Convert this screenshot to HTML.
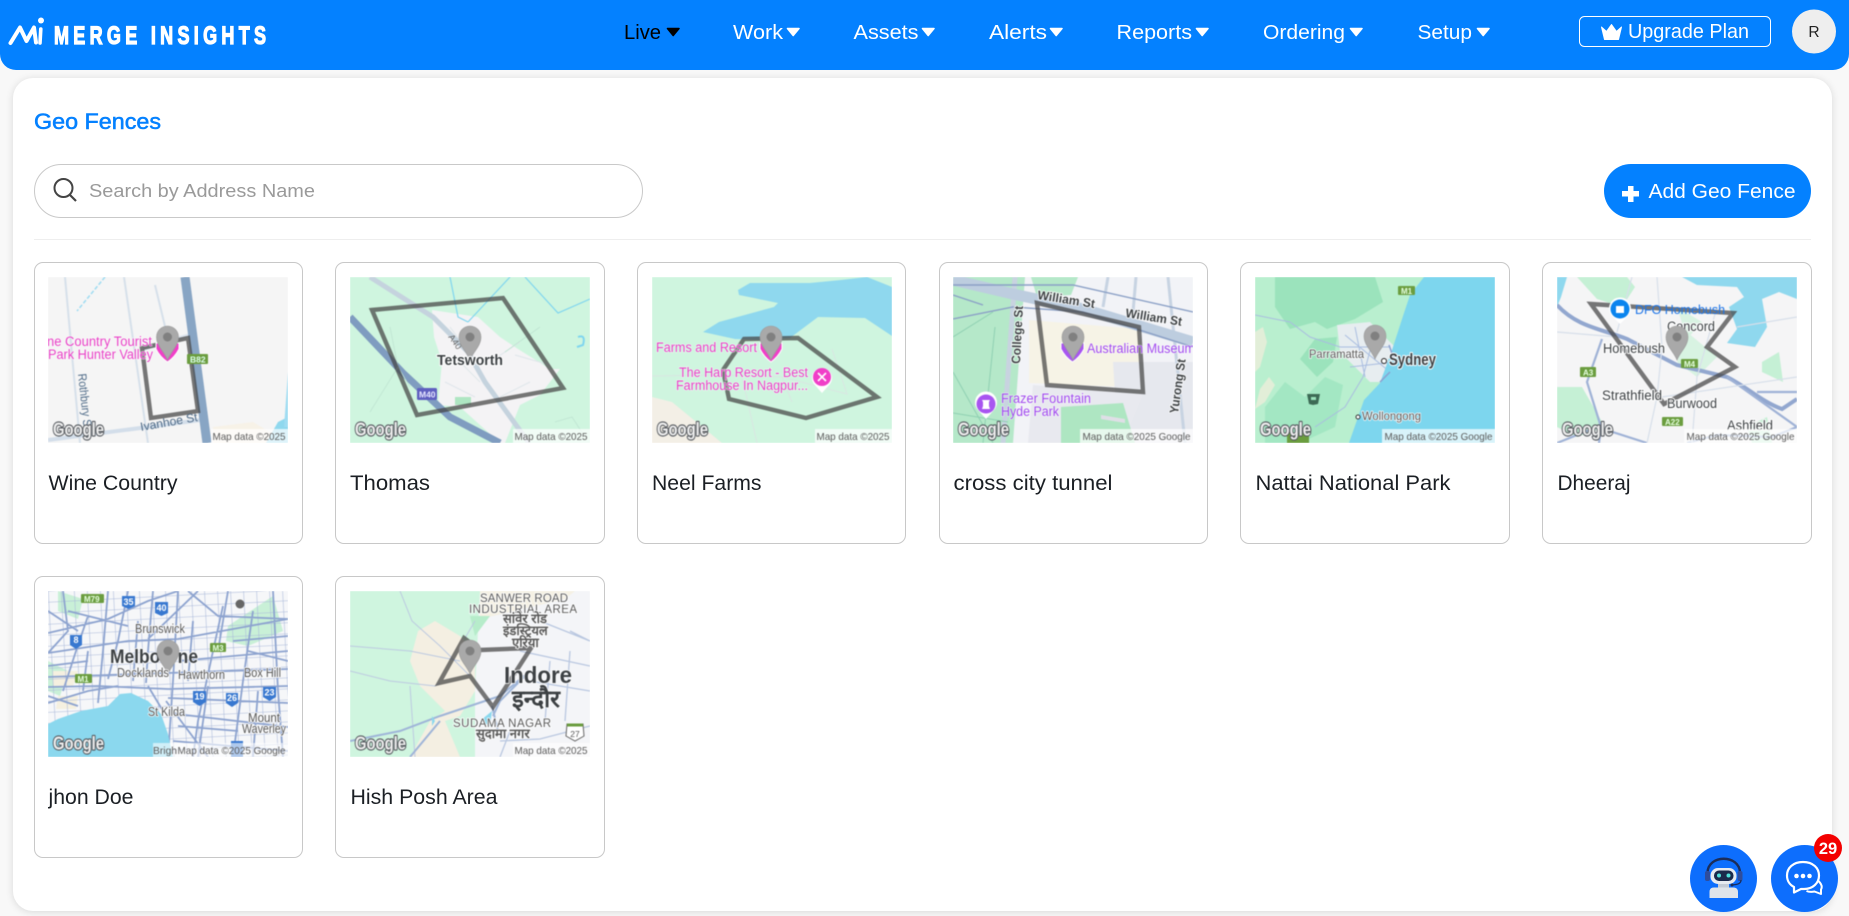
<!DOCTYPE html>
<html lang="en"><head><meta charset="utf-8"><title>Geo Fences</title>
<style>
html,body{margin:0;padding:0}
body{width:1849px;height:916px;overflow:hidden;background:#f8f8f8;position:relative;font-family:"Liberation Sans","Noto Sans CJK SC",sans-serif}
header{position:absolute;left:0;top:0;width:1849px;height:70px;background:#0481ff;border-radius:0 0 16px 16px}
main{position:absolute;left:13px;top:78px;width:1819px;height:833px;background:#fff;border-radius:20px;box-shadow:0 1px 8px rgba(0,0,0,.13)}
svg{display:block;position:absolute;left:0;top:0;overflow:hidden}
svg text{font-family:"Liberation Sans","Noto Sans CJK SC",sans-serif}
.search{position:absolute;left:34px;top:164px;width:607px;height:52px;border:1px solid #c9c9c9;border-radius:27px;background:#fff}
.add{position:absolute;left:1604px;top:164px;width:207px;height:54px;border-radius:27px;background:#0481ff}
.rule{position:absolute;left:34px;top:239px;width:1777px;height:1px;background:#eee}
.card{position:absolute;width:267px;height:280px;border:1px solid #c8c8c8;border-radius:9px;background:#fff}
.map{position:absolute;left:13px;top:14px;width:240px;height:166px;overflow:hidden}
.map svg{filter:blur(.45px)}
.name{position:absolute;left:0;top:0;width:267px;height:280px}
.g{font-size:18px;font-weight:700;fill:#eee;stroke:#55595e;stroke-width:2.2px;paint-order:stroke;stroke-linejoin:round}
.md{font-size:10.5px;fill:#5a5a5a}
.l{fill:#3c4043;paint-order:stroke;stroke:#fff;stroke-width:2px;stroke-linejoin:round}
.p{fill:#e83fc6;font-size:13.5px;paint-order:stroke;stroke:rgba(255,255,255,.6);stroke-width:1.2px}
.fence{fill:none;stroke:#444;stroke-opacity:.72;stroke-width:4.4;stroke-linejoin:miter}
.fab{position:absolute;top:845px;width:67px;height:67px;border-radius:50%;background:#0d6efd}
</style></head><body>
<svg width="0" height="0" style="position:absolute"><defs>
<g id="pin"><path d="M0 34C-3 26-11 20-11 11A11 11 0 1 1 11 11C11 20 3 26 0 34Z" fill="#a9a9a9" stroke="#9a9a9a" stroke-width=".6"/><circle cy="11" r="4.5" fill="#808080"/></g>
</defs></svg>

<header>
<svg width="1849" height="70" viewBox="0 0 1849 70">
<path d="M10.500 43L20 27.500L26.500 41L34 27.500L36 42.500" fill="none" stroke="#fff" stroke-width="4" stroke-linejoin="round" stroke-linecap="round"/>
<path d="M40.800 29L40 43" fill="none" stroke="#fff" stroke-width="3.600" stroke-linecap="round"/><circle cx="41" cy="20.500" r="3" fill="#fff"/>
<text transform="scale(.72 1)" x="75" y="44" font-size="25" font-weight="700" fill="#fff" stroke="#fff" stroke-width="1.300" textLength="294.500" lengthAdjust="spacing">MERGE INSIGHTS</text>
<g font-size="20.5" fill="#fff">
<text x="624" y="39" fill="#000" textLength="37" lengthAdjust="spacingAndGlyphs">Live</text>
<text x="733" y="39" textLength="50" lengthAdjust="spacingAndGlyphs">Work</text>
<text x="853.5" y="39" textLength="65" lengthAdjust="spacingAndGlyphs">Assets</text>
<text x="989" y="39" textLength="58" lengthAdjust="spacingAndGlyphs">Alerts</text>
<text x="1116.5" y="39" textLength="75.5" lengthAdjust="spacingAndGlyphs">Reports</text>
<text x="1263" y="39" textLength="82" lengthAdjust="spacingAndGlyphs">Ordering</text>
<text x="1417.5" y="39" textLength="54.5" lengthAdjust="spacingAndGlyphs">Setup</text>
</g>
<g stroke-linejoin="round" stroke-width="1.6">
<path d="M667.5 28.5H679L673.2 35.5Z" fill="#000" stroke="#000"/>
<g fill="#fff" stroke="#fff">
<path d="M787.5 28.5H799L793.2 35.5Z"/><path d="M922.5 28.5H934L928.2 35.5Z"/><path d="M1050.5 28.5H1062L1056.2 35.5Z"/><path d="M1196.5 28.5H1208L1202.2 35.5Z"/><path d="M1350.5 28.5H1362L1356.2 35.5Z"/><path d="M1477.5 28.5H1489L1483.2 35.5Z"/>
</g></g>
<rect x="1579.5" y="16.5" width="191" height="30" rx="5" fill="none" stroke="#fff"/>
<path d="M1601.500 27L1606.500 31.500L1611.500 24.500L1616.500 31.500L1621.500 27L1618.500 39.500H1604.500Z" fill="#fff" stroke="#fff" stroke-width="1" stroke-linejoin="round"/>
<text x="1628" y="38" font-size="20.5" fill="#fff" textLength="121" lengthAdjust="spacingAndGlyphs">Upgrade Plan</text>
<circle cx="1814" cy="31.5" r="22" fill="#eee"/>
<text x="1814" y="37" font-size="15.5" fill="#222" text-anchor="middle">R</text>
</svg>
</header>

<main></main>

<svg width="300" height="60" style="left:0;top:90px"><text x="34" y="39" font-size="22.5" fill="#0481ff" stroke="#0481ff" stroke-width=".55" textLength="127" lengthAdjust="spacingAndGlyphs">Geo Fences</text></svg>

<div class="search"></div>
<svg width="400" height="70" style="left:0;top:160px">
<circle cx="63.5" cy="28" r="9" fill="none" stroke="#444" stroke-width="2"/><path d="M70 35L76 41" stroke="#444" stroke-width="2.2"/>
<text x="89" y="37" font-size="18.5" fill="#9a9a9a" textLength="226" lengthAdjust="spacingAndGlyphs">Search by Address Name</text>
</svg>
<div class="add">
<svg width="207" height="54">
<path d="M18 27H35V32.500H18Z" fill="#fff"/><path d="M24 22H29.500V38H24Z" fill="#fff"/>
<text x="44.5" y="34" font-size="20.5" fill="#fff" textLength="147" lengthAdjust="spacingAndGlyphs">Add Geo Fence</text>
</svg>
</div>
<div class="rule"></div>

<!-- Card 1 -->
<div class="card" style="left:34px;top:262px"><div class="map"><svg width="240" height="166" viewBox="0 0 240 166">
<rect width="240" height="166" fill="#f5f5f5"/>
<path d="M17 0L32 166M76 0L100 166M107 8L122 70" stroke="#d6e0ea" stroke-width="2" fill="none"/>
<path d="M57 0L29 34" stroke="#9fdcf2" stroke-width="1.5" stroke-dasharray="4 2" fill="none"/>
<path d="M0 163L100 150L160 142" stroke="#d3deea" stroke-width="4" fill="none"/>
<path d="M95 72L142 58" stroke="#dde5ee" stroke-width="4" fill="none"/>
<path d="M137 0L159 166" stroke="#88a5c4" stroke-width="9" fill="none"/>
<path d="M165 150L205 145L240 166H165Z" fill="#f7f2e7"/><path d="M218 166L230 145L240 140V166Z" fill="#8fd8ee"/>
<path d="M240 95L236 150H240Z" fill="#9fdcf2"/>
<polygon class="fence" points="94,71 140,61 150,134 103,141"/>
<text class="p" x="-1" y="69" textLength="105" lengthAdjust="spacingAndGlyphs">ne Country Tourist</text>
<text class="p" x="0" y="82" textLength="105" lengthAdjust="spacingAndGlyphs">Park Hunter Valley</text>
<path d="M108 66V72Q112 80 119.500 85Q127 80 131 72V66Z" fill="#f03fc8" stroke="#fff" stroke-width="1"/>
<use href="#pin" x="119.5" y="49"/>
<rect x="139" y="77" width="21" height="10" rx="1" fill="#6b9d3f"/><text x="142" y="85.5" font-size="8.5" font-weight="700" fill="#dfe">B82</text>
<text x="30" y="97" font-size="12" fill="#4e6a87" transform="rotate(84 30 97)" textLength="56" lengthAdjust="spacingAndGlyphs">Rothbury St</text>
<text x="93" y="154" font-size="12" fill="#4e6a87" transform="rotate(-10 93 154)" textLength="58" lengthAdjust="spacingAndGlyphs">Ivanhoe St</text>
<text class="g" x="5" y="158.500" textLength="51" lengthAdjust="spacingAndGlyphs">Google</text>
<rect x="163" y="152" width="77" height="14" fill="#fff" fill-opacity=".7"/><text class="md" x="164.5" y="163" textLength="73" lengthAdjust="spacingAndGlyphs">Map data ©2025</text>
</svg></div>
<svg class="name" width="267" height="280"><text x="13.500" y="227" font-size="21.5" fill="#1b1f24" textLength="129" lengthAdjust="spacingAndGlyphs">Wine Country</text></svg></div>

<!-- Card 2 -->
<div class="card" style="left:335px;top:262px;width:268px"><div class="map" style="left:13.5px"><svg width="240" height="166" viewBox="0 0 240 166">
<rect width="240" height="166" fill="#cff5df"/>
<path d="M82 33L128 40L150 60L168 72L200 92L210 92L190 118L170 128L155 166L150 166L110 130L88 128L92 85L84 60Z" fill="#f4f3f5"/>
<path d="M105 120h16v8h-16z" fill="#aee6c2"/>
<path d="M100 50L115 70M110 85L130 105M95 105L125 120M150 120L180 105M140 85L170 65M165 78L200 88" stroke="#dfe6ea" stroke-width="1" fill="none"/>
<path d="M20 0L83 40L118 75L135 105L179 166" stroke="#c5d3de" stroke-width="5" fill="none"/>
<path d="M0 40L53 96L100 140L150 166" stroke="#7f9cc0" stroke-width="7" fill="none"/>
<path d="M100 0L108 40L118 45M160 0L118 45M175 0L208 36L240 22" stroke="#7fd5ef" stroke-width="1.2" fill="none"/>
<path d="M228 60q8-3 5 8l-6 2" stroke="#7fd5ef" stroke-width="2" fill="none"/>
<path d="M20 135L48 90L40 50M48 90L60 110M190 50L155 75M205 145L222 140L235 160" stroke="#bfe4d2" stroke-width=".8" fill="none"/>
<polygon class="fence" points="22,33 153,21 213,111 67,138"/>
<text x="98" y="60" font-size="9" fill="#666" transform="rotate(55 98 60)">A40</text>
<use href="#pin" x="120" y="49"/>
<text class="l" x="87" y="88" font-size="14.500" font-weight="700" textLength="66" lengthAdjust="spacingAndGlyphs">Tetsworth</text>
<rect x="67" y="111" width="20" height="12" rx="1.5" fill="#5f5fc0"/><text x="69" y="120.5" font-size="8.5" font-weight="700" fill="#e6e6ff">M40</text>
<text class="g" x="5" y="158.500" textLength="51" lengthAdjust="spacingAndGlyphs">Google</text>
<rect x="163" y="152" width="77" height="14" fill="#fff" fill-opacity=".7"/><text class="md" x="164.5" y="163" textLength="73" lengthAdjust="spacingAndGlyphs">Map data ©2025</text>
</svg></div>
<svg class="name" width="267" height="280"><text x="14" y="227" font-size="21.5" fill="#1b1f24" textLength="80" lengthAdjust="spacingAndGlyphs">Thomas</text></svg></div>

<!-- Card 3 -->
<div class="card" style="left:637px;top:262px"><div class="map" style="left:14px"><svg width="240" height="166" viewBox="0 0 240 166">
<rect width="240" height="166" fill="#cff5df"/>
<polygon fill="#8fd8ee" points="86,13 98,6 158,6 189,3 215,0 240,10 240,59 213,41 166,40 138,61 114,63 83,62 51,55 67,45 122,30 126,26 102,21 87,18"/>
<path d="M0 120L20 125L70 166H0Z" fill="#f3efe6"/>
<path d="M0 99L70 98L130 100L195 117L180 72M90 100L105 166M130 100L140 125" stroke="#d9e6e2" stroke-width="1" fill="none"/>
<polygon class="fence" points="92,62 146,61 225,120 154,141 77,122 71,93"/>
<text class="p" x="4" y="75" textLength="101" lengthAdjust="spacingAndGlyphs">Farms and Resort</text>
<path d="M108 66V72Q112 80 119 85Q126 80 130 72V66Z" fill="#f03fc8" stroke="#fff" stroke-width="1"/>
<use href="#pin" x="119" y="49"/>
<text class="p" x="27" y="100" textLength="129" lengthAdjust="spacingAndGlyphs">The Harp Resort - Best</text>
<text class="p" x="24" y="113" textLength="132" lengthAdjust="spacingAndGlyphs">Farmhouse In Nagpur...</text>
<path d="M170 116L162 107A10 10 0 1 1 178 107Z" fill="#fff"/><circle cx="170" cy="100" r="9" fill="#f03fc8"/><path d="M166 104L174 96M166 96L174 104" stroke="#fff" stroke-width="1.6"/>
<text class="g" x="5" y="158.500" textLength="51" lengthAdjust="spacingAndGlyphs">Google</text>
<rect x="163" y="152" width="77" height="14" fill="#fff" fill-opacity=".7"/><text class="md" x="164.5" y="163" textLength="73" lengthAdjust="spacingAndGlyphs">Map data ©2025</text>
</svg></div>
<svg class="name" width="267" height="280"><text x="14" y="227" font-size="21.5" fill="#1b1f24" textLength="109.5" lengthAdjust="spacingAndGlyphs">Neel Farms</text></svg></div>

<!-- Card 4 -->
<div class="card" style="left:938.5px;top:262px"><div class="map"><svg width="240" height="166" viewBox="0 0 240 166">
<rect width="240" height="166" fill="#f2f3f7"/>
<path d="M0 0H72L60 166H0Z" fill="#b5e8c9"/><path d="M125 0L118 18L84 20L78 0Z" fill="#b5e8c9"/>
<path d="M76 43L186 52L186 100L172 110L76 106Z" fill="#f6f3e6"/>
<path d="M160 85H240V166H165Z" fill="#e6e8ee"/><path d="M80 108L190 118L170 166H75Z" fill="#e8e9ef"/>
<path d="M108 130L170 126L182 166H108Z" fill="#aee6c2"/><path d="M148 138L172 142V146L148 142Z" fill="#dfdfe6"/>
<path d="M62 0L50 166" stroke="#c8d3e0" stroke-width="5" fill="none"/>
<path d="M215 0L232 166" stroke="#c7d3e2" stroke-width="3" fill="none"/>
<path d="M155 0L150 30M183 0L180 35" stroke="#c7d3e2" stroke-width="3" fill="none"/>
<path d="M0 3L60 17L130 32L240 65" stroke="#bdcddf" stroke-width="11" fill="none"/>
<path d="M0 18L30 28M0 42L60 30L130 35L240 70M0 8L120 8L240 35" stroke="#8ba0c6" stroke-width="1.4" fill="none"/>
<path d="M0 95L40 166M0 60L40 35M42 50L30 166M0 136L55 145" stroke="#8fd0b2" stroke-width="1" fill="none"/>
<polygon class="fence" points="84,26 186,50 190,115 94,108"/>
<g font-weight="700" fill="#3e4a5e" font-size="12.500" class="l" style="stroke-width:1.5px">
<text x="84" y="22" transform="rotate(9 84 22)" textLength="58" lengthAdjust="spacingAndGlyphs">William St</text>
<text x="172" y="40" transform="rotate(9 172 40)" textLength="57" lengthAdjust="spacingAndGlyphs">William St</text>
<text x="67" y="87" transform="rotate(-87 67 87)" textLength="58" lengthAdjust="spacingAndGlyphs">College St</text>
<text x="225" y="137" transform="rotate(-82 225 137)" textLength="55" lengthAdjust="spacingAndGlyphs">Yurong St</text>
</g>
<path d="M108 66V72Q112 80 119.500 85Q127 80 131 72V66Z" fill="#a855f0" stroke="#fff" stroke-width="1"/>
<use href="#pin" x="120" y="49"/>
<text class="p" x="134" y="76" style="fill:#a048ee" textLength="108" lengthAdjust="spacingAndGlyphs">Australian Museum</text>
<path d="M33 142L25 133A11 11 0 1 1 41 133Z" fill="#fff"/><circle cx="33" cy="127" r="9.5" fill="#a855f0"/><path d="M29 132h8l-1-3v-4l1-2h-8l1 2v4Z" fill="#fff"/>
<text class="p" x="48" y="126" style="fill:#a048ee" textLength="90" lengthAdjust="spacingAndGlyphs">Frazer Fountain</text>
<text class="p" x="48" y="139" style="fill:#a048ee" textLength="58" lengthAdjust="spacingAndGlyphs">Hyde Park</text>
<text class="g" x="5" y="158.500" textLength="51" lengthAdjust="spacingAndGlyphs">Google</text>
<rect x="127" y="152" width="113" height="14" fill="#fff" fill-opacity=".7"/><text class="md" x="129.5" y="163" textLength="108" lengthAdjust="spacingAndGlyphs">Map data ©2025 Google</text>
</svg></div>
<svg class="name" width="267" height="280"><text x="13.500" y="227" font-size="21.5" fill="#1b1f24" textLength="159" lengthAdjust="spacingAndGlyphs">cross city tunnel</text></svg></div>

<!-- Card 5 -->
<div class="card" style="left:1240px;top:262px;width:268px"><div class="map" style="left:14px"><svg width="240" height="166" viewBox="0 0 240 166">
<rect width="240" height="166" fill="#b9efcf"/>
<path d="M20 0H120L128 25L100 42L72 52L60 45L35 52L20 30ZM60 62L82 60L78 85L62 100L45 82Z" fill="#9be3bc"/>
<path d="M10 130L30 105L50 120L70 100L88 108L80 150L45 166H10Z" fill="#a3e7c3"/>
<path d="M0 55L8 50L12 65L5 90L0 95ZM5 112L14 100L20 108L10 125L0 132Z" fill="#f0eedb" fill-opacity=".75"/>
<path d="M82 48L115 45L140 70L140 105L115 105L100 90L85 75Z" fill="#e7edf0"/>
<path d="M90 58L135 95M85 70L135 70M100 50L110 100M120 55L108 100M95 90L140 85M0 38L35 45L55 60L85 70M108 100L90 130L60 150" stroke="#a9bde0" stroke-width="1" fill="none"/>
<polygon fill="#7dd6ee" points="169,0 240,0 240,166 94,166 109,123 125,106 137,73 149,36 155,18"/>
<path d="M134 68L140 85M125 105L135 95" stroke="#8ba0d0" stroke-width="1.5" fill="none"/>
<rect x="143" y="9" width="17" height="9" rx="1" fill="#6b9d3f"/><text x="146" y="17" font-size="8" font-weight="700" fill="#e6ffe0">M1</text>
<path d="M52 117H65L63 127L58 128L54 127Z" fill="#3d6a55"/><rect x="56" y="120" width="5" height="3" fill="#9be3bc"/>
<rect x="32" y="156" width="22" height="10" fill="#6b9d3f"/>
<use href="#pin" x="120" y="48"/>
<text class="l" x="54" y="81" font-size="12" style="fill:#555;stroke-width:1.5px" textLength="55" lengthAdjust="spacingAndGlyphs">Parramatta</text>
<circle cx="129" cy="84" r="2.5" fill="#fff" stroke="#222"/>
<text class="l" x="134" y="88" font-size="16.500" font-weight="700" textLength="47" lengthAdjust="spacingAndGlyphs">Sydney</text>
<circle cx="103" cy="140" r="2" fill="#fff" stroke="#333"/>
<text class="l" x="107" y="143" font-size="12" style="fill:#555;stroke-width:1.5px" textLength="59" lengthAdjust="spacingAndGlyphs">Wollongong</text>
<text class="g" x="5" y="158.500" textLength="51" lengthAdjust="spacingAndGlyphs">Google</text>
<rect x="127" y="152" width="113" height="14" fill="#fff" fill-opacity=".7"/><text class="md" x="129.5" y="163" textLength="108" lengthAdjust="spacingAndGlyphs">Map data ©2025 Google</text>
</svg></div>
<svg class="name" width="267" height="280"><text x="14.500" y="227" font-size="21.5" fill="#1b1f24" textLength="195" lengthAdjust="spacingAndGlyphs">Nattai National Park</text></svg></div>

<!-- Card 6 -->
<div class="card" style="left:1541.5px;top:262px;width:268px"><div class="map" style="left:14px"><svg width="240" height="166" viewBox="0 0 240 166">
<rect width="240" height="166" fill="#f5f5f6"/>
<polygon fill="#8fd8ee" points="125,0 240,0 240,22 222,15 205,22 210,50 198,70 170,66 180,52 172,30 187,20 180,10 140,8"/>
<path d="M0 0H10L4 20L0 30Z" fill="#8fd8ee"/>
<path d="M20 0H70L78 10L65 30L40 22ZM0 110H25L48 150L20 160L0 150ZM190 150L210 140L215 166H195ZM205 85L222 75L226 105L205 95Z" fill="#c5f0d5"/>
<path d="M130 55L160 80L140 100L120 85ZM120 30L145 45L130 62Z" fill="#d8f3e2" />
<path d="M0 28C20 50 45 52 70 62L120 88L170 100C190 110 205 125 225 132L240 122" stroke="#92a7cf" stroke-width="4" fill="none"/>
<path d="M45 62L30 105L44 150L42 166M170 100L240 150M0 166L40 150L90 166M130 166L160 158L215 160L240 150M200 115L240 115" stroke="#9fb2d6" stroke-width="2.2" fill="none"/>
<path d="M75 0L60 55M100 0L105 70L100 120L90 166M160 30L140 100L135 166M0 55L60 60M105 120L240 100M180 50L240 40" stroke="#d7dfea" stroke-width="1.2" fill="none"/>
<rect x="23" y="90" width="16" height="10" rx="1" fill="#6b9d3f"/><text x="26" y="98.5" font-size="8" font-weight="700" fill="#e6ffe0">A3</text>
<rect x="124" y="82" width="17" height="9" rx="1" fill="#6b9d3f"/><text x="127" y="90" font-size="8" font-weight="700" fill="#e6ffe0">M4</text>
<rect x="105" y="140" width="21" height="9" rx="1" fill="#6b9d3f"/><text x="108" y="148" font-size="8" font-weight="700" fill="#e6ffe0">A22</text>
<polygon class="fence" points="34,27 176,36 150,70 178,90 107,127"/>
<path d="M63 47L55 39A11 11 0 1 1 71 39Z" fill="#fff"/><circle cx="63" cy="32" r="9.5" fill="#0a84ee"/><rect x="59" y="29" width="8" height="7" fill="#fff"/>
<text x="78" y="37" font-size="13" fill="#1a73e8" textLength="90" lengthAdjust="spacingAndGlyphs">DFO Homebush</text>
<g font-size="13.500">
<text class="l" x="110" y="54" textLength="48" lengthAdjust="spacingAndGlyphs">Concord</text>
<text class="l" x="46" y="76" textLength="62" lengthAdjust="spacingAndGlyphs">Homebush</text>
<text class="l" x="45" y="123" textLength="60" lengthAdjust="spacingAndGlyphs">Strathfield</text>
<text class="l" x="110" y="131" textLength="50" lengthAdjust="spacingAndGlyphs">Burwood</text>
<text class="l" x="170" y="153" textLength="46" lengthAdjust="spacingAndGlyphs">Ashfield</text>
</g>
<use href="#pin" x="120" y="49"/>
<text class="g" x="5" y="158.500" textLength="51" lengthAdjust="spacingAndGlyphs">Google</text>
<rect x="127" y="152" width="113" height="14" fill="#fff" fill-opacity=".7"/><text class="md" x="129.5" y="163" textLength="108" lengthAdjust="spacingAndGlyphs">Map data ©2025 Google</text>
</svg></div>
<svg class="name" width="267" height="280"><text x="14.500" y="227" font-size="21.5" fill="#1b1f24" textLength="73" lengthAdjust="spacingAndGlyphs">Dheeraj</text></svg></div>

<!-- Card 7 -->
<div class="card" style="left:34px;top:576px"><div class="map"><svg width="240" height="166" viewBox="0 0 240 166">
<defs><pattern id="gr" width="13" height="11" patternUnits="userSpaceOnUse" patternTransform="rotate(-3)"><path d="M0 0H13M0 0V11" stroke="#a9b8d9" stroke-width="1.100" fill="none"/></pattern></defs>
<rect width="240" height="166" fill="#f6f7f9"/>
<path d="M10 0L35 8L30 28L10 20ZM180 35L225 5L235 40L200 55L178 50ZM0 70L20 80L12 105L0 100Z" fill="#c9f0d7"/>
<path d="M5 80H30L25 95H5ZM10 105H30L28 118H8Z" fill="#f5f0e0"/>
<rect width="240" height="166" fill="url(#gr)"/>
<path d="M0 42L60 28L100 10L130 0M0 62L80 50L130 48L240 28M0 86L60 84L120 82L240 78M0 96L50 95L120 98L240 95M0 112L40 100L70 95M60 0L55 60L50 112M15 0L20 40L0 62M80 0L70 50L60 88M105 0L100 60L98 92M130 0L125 90L120 166M175 15L165 60L150 130L145 166M205 20L195 90L185 166M225 0L230 100L235 166M120 122L240 136M120 107L240 112M125 150L240 160M140 0L170 25L240 28M150 0L100 48M180 0L170 60M40 60L35 100M118 110L160 166M200 60L240 70M130 70L240 60M20 20L80 35M0 20L30 40M40 25L28 60L15 100M0 75L40 70M90 30L85 90M145 30L140 90M160 95L150 166M210 100L205 166M130 135L190 140M100 95L115 120M0 105L30 115M185 50L240 45" stroke="#8da3cf" stroke-width="1.800" fill="none"/>
<polygon fill="#8bd8ee" points="0,133 10,128 33,120 60,115 72,103 83,102 100,110 113,123 120,143 125,166 0,166"/>
<circle cx="192" cy="13" r="4.5" fill="#666"/>
<rect x="33" y="3" width="23" height="9" rx="1" fill="#6b9d3f"/><text x="36" y="11" font-size="8" font-weight="700" fill="#e6ffe0">M79</text>
<rect x="162" y="52" width="16" height="9" rx="1" fill="#6b9d3f"/><text x="164.5" y="60" font-size="8" font-weight="700" fill="#e6ffe0">M3</text>
<rect x="27" y="83" width="17" height="9" rx="1" fill="#6b9d3f"/><text x="29.500" y="91" font-size="8" font-weight="700" fill="#e6ffe0">M1</text>
<g fill="#3878d0"><path d="M74 5H87V15L80.500 18L74 15Z"/><path d="M107 11H120V22L113.500 25L107 22Z"/><path d="M22 44H34V54L28 58L22 54Z"/><path d="M145 100H158V111L151.500 115L145 111Z"/><path d="M178 102H190V112L184 116L178 112Z"/><path d="M215 96H228V106L221.500 110L215 106Z"/><path d="M183 150H195V166H183Z"/></g>
<g fill="#fff" font-size="9" font-weight="700" text-anchor="middle"><text x="80.500" y="14">35</text><text x="113.500" y="20">40</text><text x="28" y="52">8</text><text x="151.500" y="108.500">19</text><text x="184" y="110">26</text><text x="221.500" y="104.500">23</text></g>
<text class="l" x="62" y="72" font-size="19" font-weight="700" style="stroke-width:1.5px" textLength="88" lengthAdjust="spacingAndGlyphs">Melbourne</text>
<use href="#pin" x="120" y="49"/>
<g font-size="12.500"><text class="l" x="87" y="42" style="fill:#555;stroke-width:1.5px" textLength="50" lengthAdjust="spacingAndGlyphs">Brunswick</text>
<text class="l" x="69" y="86" style="fill:#555;stroke-width:1.5px" textLength="52" lengthAdjust="spacingAndGlyphs">Docklands</text>
<text class="l" x="130" y="88" style="fill:#555;stroke-width:1.5px" textLength="47" lengthAdjust="spacingAndGlyphs">Hawthorn</text>
<text class="l" x="196" y="86" style="fill:#555;stroke-width:1.5px" textLength="37" lengthAdjust="spacingAndGlyphs">Box Hill</text>
<text class="l" x="100" y="125" style="fill:#555;stroke-width:1.5px" textLength="37" lengthAdjust="spacingAndGlyphs">St Kilda</text>
<text class="l" x="200" y="131" style="fill:#555;stroke-width:1.5px" textLength="32" lengthAdjust="spacingAndGlyphs">Mount</text>
<text class="l" x="194" y="142" style="fill:#555;stroke-width:1.5px" textLength="44" lengthAdjust="spacingAndGlyphs">Waverley</text></g>
<text class="g" x="5" y="158.500" textLength="51" lengthAdjust="spacingAndGlyphs">Google</text>
<rect x="105" y="152" width="135" height="14" fill="#fff" fill-opacity=".6"/><text class="md" x="105" y="163" textLength="24" lengthAdjust="spacingAndGlyphs">Brigh</text><text class="md" x="129.500" y="163" textLength="108" lengthAdjust="spacingAndGlyphs">Map data ©2025 Google</text>
</svg></div>
<svg class="name" width="267" height="280"><text x="13.500" y="227" font-size="21.5" fill="#1b1f24" textLength="85" lengthAdjust="spacingAndGlyphs">jhon Doe</text></svg></div>

<!-- Card 8 -->
<div class="card" style="left:335px;top:576px;width:268px"><div class="map" style="left:13.500px"><svg width="240" height="166" viewBox="0 0 240 166">
<rect width="240" height="166" fill="#cff5df"/>
<path d="M125 166V100L130 0H240V166Z" fill="#f4f5f8"/>
<path d="M130 0H225L215 8L130 28Z" fill="#f5f1e4"/>
<path d="M68 40L85 30L110 45L125 60L125 100L110 125L95 130L110 166H60L80 130L95 120L70 95L60 70Z" fill="#f4efe2"/>
<path d="M120 25H140L125 45Z" fill="#b6ecca"/>
<path d="M50 0L62 30L90 55L120 85M0 55L60 60L110 70M0 80L40 90L85 95L90 92M60 95L65 166M125 30L115 47" stroke="#bcc9e0" stroke-width="1" fill="none"/>
<path d="M0 150L50 140L90 125L150 105L180 80L150 110L143 125M142 115L148 140M60 166L90 130" stroke="#9fb5d8" stroke-width="2" fill="none"/>
<path d="M150 150L190 148L240 135M220 40L240 50M190 30L240 50M170 60L240 75M180 90L240 100M200 70L195 130M220 60L215 130M160 140L150 166" stroke="#b9c7e0" stroke-width="1.3" fill="none"/>
<path d="M130 130L142 120L140 135ZM82 125L85 130L82 135Z" fill="#8bd8ee"/>
<polygon class="fence" points="130,59 181,57 143,116 120,85 89,92 114,47"/>
<g fill="#5a5a5a" font-size="11.500" style="paint-order:stroke;stroke:#fff;stroke-width:1.5px">
<text x="130" y="11" textLength="88" lengthAdjust="spacing">SANWER ROAD</text>
<text x="119" y="22" textLength="108" lengthAdjust="spacing">INDUSTRIAL AREA</text>
<text x="153" y="32" font-size="13" font-weight="700" font-family="'Noto Sans Devanagari','Lohit Devanagari','FreeSans',sans-serif">सांवेर रोड</text>
<text x="153" y="44" font-size="13" font-weight="700" font-family="'Noto Sans Devanagari','Lohit Devanagari','FreeSans',sans-serif">इंडस्ट्रियल</text>
<text x="162" y="56" font-size="13" font-weight="700" font-family="'Noto Sans Devanagari','Lohit Devanagari','FreeSans',sans-serif">एरिया</text>
<text x="103" y="136" textLength="98" lengthAdjust="spacing">SUDAMA NAGAR</text>
<text x="126" y="147" font-size="13" font-weight="700" font-family="'Noto Sans Devanagari','Lohit Devanagari','FreeSans',sans-serif">सुदामा नगर</text>
</g>
<use href="#pin" x="120" y="49"/>
<text class="l" x="154" y="92" font-size="23" font-weight="700" style="stroke-width:1.5px" textLength="68" lengthAdjust="spacingAndGlyphs">Indore</text>
<text class="l" x="162" y="116" font-size="24" font-weight="700" style="stroke-width:1.5px" font-family="'Noto Sans Devanagari','Lohit Devanagari','FreeSans',sans-serif">इन्दौर</text>
<path d="M217 133H233L234 145L225 150L216 145Z" fill="#fff" stroke="#666"/><rect x="217" y="132.500" width="16" height="3" fill="#6b9d3f"/><text x="225" y="146" font-size="8.500" text-anchor="middle" fill="#555">27</text>
<text class="g" x="5" y="158.500" textLength="51" lengthAdjust="spacingAndGlyphs">Google</text>
<rect x="163" y="152" width="77" height="14" fill="#fff" fill-opacity=".6"/><text class="md" x="164.500" y="163" textLength="73" lengthAdjust="spacingAndGlyphs">Map data ©2025</text>
</svg></div>
<svg class="name" width="267" height="280"><text x="14.500" y="227" font-size="21.5" fill="#1b1f24" textLength="147" lengthAdjust="spacingAndGlyphs">Hish Posh Area</text></svg></div>

<!-- Floating buttons -->
<div class="fab" style="left:1690px"><svg width="67" height="67" viewBox="0 0 67 67">
<path d="M17.500 28C17.500 9 50 9 50 28" fill="none" stroke="#1b2d5a" stroke-width="2.400"/>
<rect x="15" y="26" width="5" height="10" rx="2" fill="#2f4d9c"/><rect x="47.500" y="26" width="5" height="10" rx="2" fill="#2f4d9c"/>
<rect x="20.500" y="23" width="26" height="16" rx="7.500" fill="#e6eaf0"/>
<rect x="24" y="25.500" width="19.500" height="10.500" rx="5" fill="#1b2a4c"/>
<circle cx="29" cy="30.500" r="2" fill="#4fe0d8"/><circle cx="38.500" cy="30.500" r="2" fill="#4fe0d8"/>
<path d="M51 35C51 39 47 39.500 42 40" fill="none" stroke="#1b2d5a" stroke-width="1.300"/><circle cx="42" cy="40" r="1.500" fill="#1b2d5a"/>
<rect x="28" y="39" width="11" height="4" fill="#c4cbd6"/>
<path d="M19.500 53V47Q19.500 42.500 24 42.500H43Q48 42.500 48 47V53Z" fill="#dfe4ea"/>
</svg></div>
<div class="fab" style="left:1771px"><svg width="67" height="67" viewBox="0 0 67 67">
<path d="M32 17C22 17 16 23 16 30.500C16 36 19 40 23 42L23 47.500L30 44C31 44 32 44 33 44C42 44 48 38 48 30.500C48 23 42 17 32 17Z" fill="none" stroke="#fff" stroke-width="2.200" stroke-linejoin="round"/>
<circle cx="25.500" cy="31" r="2.300" fill="#fff"/><circle cx="32" cy="31" r="2.300" fill="#fff"/><circle cx="38.500" cy="31" r="2.300" fill="#fff"/>
<path d="M47.500 36C50.500 39 51.500 42 50 44.500L50 49L43.500 46.500C41 47 38 47 35.500 46" fill="none" stroke="#fff" stroke-width="2" stroke-linejoin="round"/>
</svg></div>
<svg width="30" height="30" style="left:1813px;top:833px"><circle cx="15" cy="15" r="14" fill="#f30000"/><text x="15" y="21" font-size="16.500" font-weight="700" fill="#fff" text-anchor="middle">29</text></svg>
</body></html>
